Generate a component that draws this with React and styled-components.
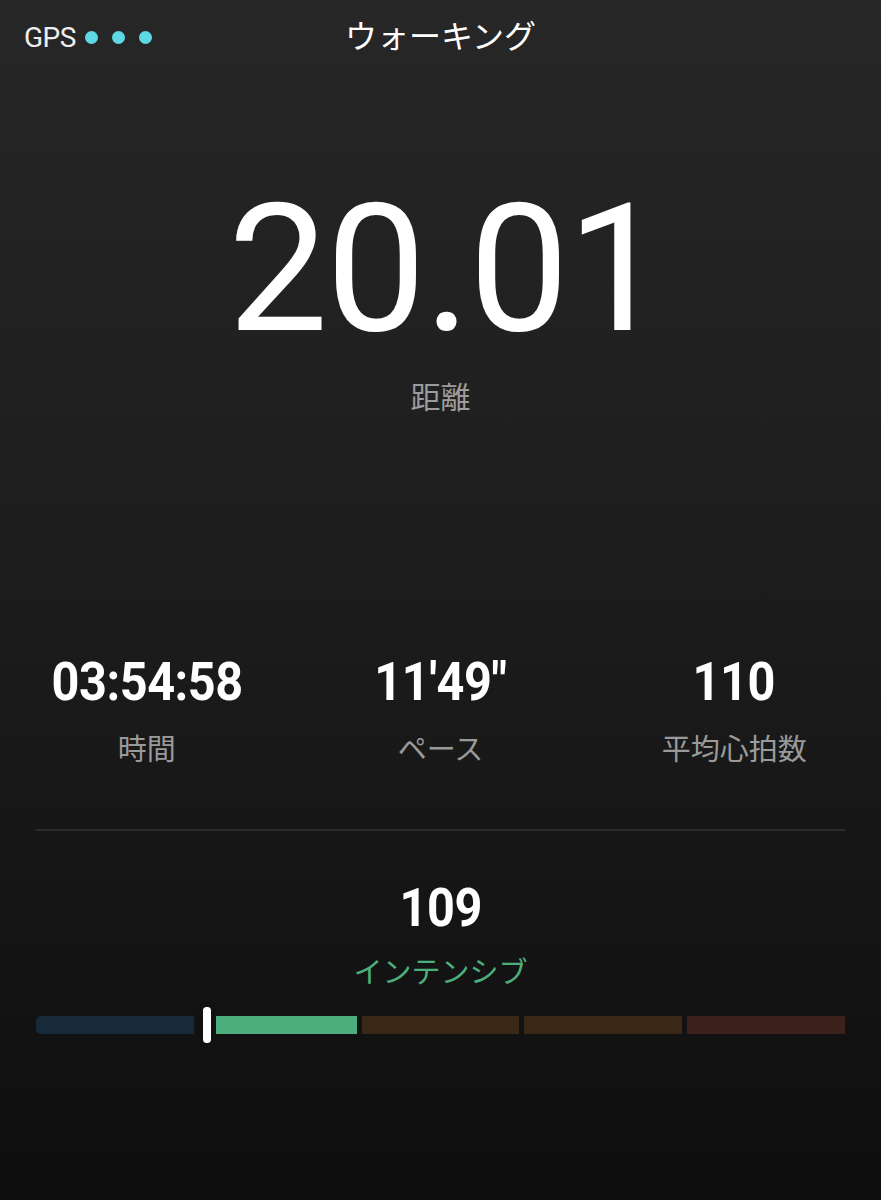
import React from 'react';
import styled, { createGlobalStyle } from 'styled-components';

const GlobalStyle = createGlobalStyle`
  html, body {
    margin: 0;
    padding: 0;
    background: #0e0e0e;
  }
  body {
    font-family: Roboto, "Noto Sans CJK JP", sans-serif;
  }
`;

const stats = [
  { value: '03:54:58', label: '時間' },
  { value: '11\u203249\u2033', label: 'ペース' },
  { value: '110', label: '平均心拍数' },
];

const zones = ['#172a3a', '#4caf7d', '#3a2817', '#3a2817', '#3d211c'];

function App() {
  const heartRate = 109;
  // marker sits at the start of the second zone
  const markerLeft = ((heartRate - 89) / 100) * 100;

  return (
    <Page>
      <GlobalStyle />
      <Header>
        <Gps>
          GPS
          <Dots>
            <Dot />
            <Dot />
            <Dot />
          </Dots>
        </Gps>
        <Title>ウォーキング</Title>
        <span />
      </Header>

      <Hero>
        <BigNumber>20.01</BigNumber>
        <HeroLabel>距離</HeroLabel>
      </Hero>

      <StatGrid>
        {stats.map((s) => (
          <Stat key={s.label}>
            <StatValue>{s.value}</StatValue>
            <StatLabel>{s.label}</StatLabel>
          </Stat>
        ))}
      </StatGrid>

      <Divider />

      <Intensity>
        <StatValue>{heartRate}</StatValue>
        <ZoneName>インテンシブ</ZoneName>
        <ZoneBar>
          {zones.map((c, i) => (
            <Zone key={i} $color={c} />
          ))}
          <Marker style={{ left: `${markerLeft}%` }} />
        </ZoneBar>
      </Intensity>
    </Page>
  );
}

const Page = styled.div`
  min-height: 1200px;
  display: flex;
  flex-direction: column;
  background: linear-gradient(180deg, #272727 0%, #1c1c1c 50%, #0e0e0e 100%);
  color: #fff;
`;

const Header = styled.header`
  height: 74px;
  padding: 0 24px;
  display: grid;
  grid-template-columns: 1fr auto 1fr;
  align-items: center;
`;

const Gps = styled.div`
  display: flex;
  align-items: center;
  font-family: Roboto, sans-serif;
  font-size: 28px;
  color: #eeeeee;
  letter-spacing: -0.5px;
`;

const Dots = styled.div`
  display: flex;
  gap: 14px;
  margin-left: 9px;
`;

const Dot = styled.span`
  width: 13px;
  height: 13px;
  border-radius: 50%;
  background: #5fd8e6;
`;

const Title = styled.h1`
  margin: -7px 0 0;
  font-family: "Noto Sans CJK JP", sans-serif;
  font-weight: 400;
  font-size: 32px;
  color: #ffffff;
`;

const Hero = styled.section`
  display: flex;
  flex-direction: column;
  align-items: center;
  margin-top: 106px;
`;

const BigNumber = styled.div`
  margin-left: 12px;
  font-family: Roboto, sans-serif;
  font-weight: 400;
  font-size: 178px;
  line-height: 1;
  letter-spacing: -2px;
`;

const HeroLabel = styled.div`
  margin-top: 19px;
  font-family: "Noto Sans CJK JP", sans-serif;
  font-size: 30px;
  line-height: 36px;
  color: #9c9c9c;
`;

const StatGrid = styled.section`
  display: grid;
  grid-template-columns: repeat(3, 1fr);
  margin-top: 242px;
`;

const Stat = styled.div`
  display: flex;
  flex-direction: column;
  align-items: center;
`;

const StatValue = styled.div`
  font-family: Roboto, sans-serif;
  font-weight: 700;
  font-size: 54px;
  line-height: 1;
  letter-spacing: -0.5px;
  color: #ffffff;
  transform: scaleX(0.9);
`;

const StatLabel = styled.div`
  margin-top: 20px;
  font-family: "Noto Sans CJK JP", sans-serif;
  font-size: 29px;
  line-height: 36px;
  color: #9a9a9a;
`;

const Divider = styled.hr`
  margin: 64px 36px 0;
  height: 2px;
  border: 0;
  background: #2c2c2c;
`;

const Intensity = styled.section`
  display: flex;
  flex-direction: column;
  align-items: center;
  margin-top: 50px;
`;

const ZoneName = styled.div`
  margin-top: 17px;
  font-family: "Noto Sans CJK JP", sans-serif;
  font-size: 29px;
  line-height: 36px;
  color: #4caf7b;
`;

const ZoneBar = styled.div`
  position: relative;
  align-self: stretch;
  margin: 28px 36px 0;
  height: 18px;
  display: grid;
  grid-template-columns: repeat(5, 1fr);
  gap: 5px;
`;

const Zone = styled.div`
  background: ${(p) => p.$color};
  &:first-child {
    border-radius: 5px 0 0 5px;
  }
  &:last-child {
    border-radius: 0 5px 5px 0;
  }
`;

const Marker = styled.div`
  position: absolute;
  top: -14px;
  width: 8px;
  height: 36px;
  border: 5px solid #111111;
  border-radius: 8px;
  background: #ffffff;
  background-clip: padding-box;
`;

export default App;
